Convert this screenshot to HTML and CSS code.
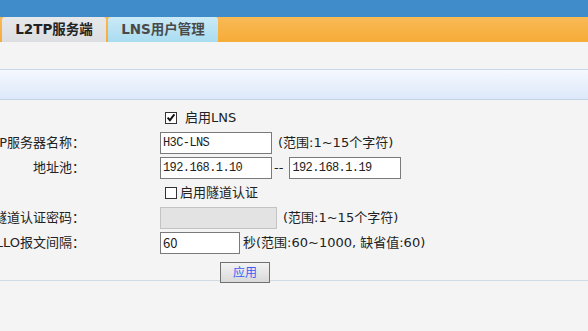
FILE: index.html
```html
<!DOCTYPE html>
<html lang="zh-CN">
<head>
<meta charset="utf-8">
<title>L2TP服务端</title>
<link rel="stylesheet" href="styles.css">
</head>
<body>
<div class="page">
  <div class="topbar"></div>
  <div class="tabbar">
    <div class="tab tab-current">L2TP服务端</div>
    <div class="tab tab-other">LNS用户管理</div>
  </div>
  <div class="spacer"></div>
  <div class="strip"></div>
  <div class="form">
    <div class="lbl"></div>
    <div class="val">
      <label class="chk chk-wide">
        <svg class="box" width="12" height="12" viewBox="0 0 12 12"><rect x="0.5" y="0.5" width="11" height="11" fill="#fff" stroke="#333"/><path d="M2.6 5.6 L4.9 8.2 L9.4 2.4" fill="none" stroke="#111" stroke-width="1.9"/></svg>
        <span>启用LNS</span>
      </label>
    </div>

    <div class="lbl">L2TP服务器名称<span class="colon">：</span></div>
    <div class="val"><input class="txt mono w112" value="H3C-LNS"><span class="hint">(范围:1~15个字符)</span></div>

    <div class="lbl">地址池<span class="colon">：</span></div>
    <div class="val"><input class="txt mono w112" value="192.168.1.10"><span class="dash">--</span><input class="txt mono w112" value="192.168.1.19"></div>

    <div class="lbl"></div>
    <div class="val">
      <label class="chk">
        <svg class="box" width="12" height="12" viewBox="0 0 12 12"><rect x="0.5" y="0.5" width="11" height="11" fill="#fff" stroke="#333"/></svg>
        <span>启用隧道认证</span>
      </label>
    </div>

    <div class="lbl">隧道认证密码<span class="colon">：</span></div>
    <div class="val"><input class="txt w117" disabled><span class="hint">(范围:1~15个字符)</span></div>

    <div class="lbl">HELLO报文间隔<span class="colon">：</span></div>
    <div class="val"><input class="txt sans w80" value="60"><span class="hint hint-tight">秒(范围:60~1000, 缺省值:60)</span></div>

    <div class="lbl"></div>
    <div class="val val-btn"><button class="btn" type="button">应用</button></div>
  </div>
  <div class="footline"></div>
</div>
</body>
</html>
```

FILE: styles.css
```css
html, body {
  margin: 0;
  padding: 0;
}
body {
  background: #f4f4f4;
  font-family: "DejaVu Sans", "Noto Sans CJK SC", sans-serif;
  font-size: 13px;
  color: #222;
  overflow: hidden;
  text-spacing-trim: space-all;
}
.page {
  width: 588px;
  height: 331px;
  overflow: hidden;
}
.topbar {
  height: 17px;
  background: #408bc9;
}
.tabbar {
  height: 25px;
  display: flex;
  gap: 2px;
  padding-left: 2px;
  background: linear-gradient(#f9b956, #f6ac38);
}
.tab {
  height: 25px;
  display: flex;
  align-items: center;
  justify-content: center;
  border-radius: 3px 3px 0 0;
  font-weight: bold;
  font-size: 13.5px;
  line-height: 1;
}
.tab-current {
  width: 104px;
  background: linear-gradient(#e6e8ea, #dcdee1);
  color: #222;
}
.tab-other {
  width: 110px;
  background: linear-gradient(#cbeaf7, #a9dcf0);
  color: #4a4a4a;
}
.spacer {
  height: 27px;
}
.strip {
  height: 29px;
  border-top: 1px solid #c8d8e8;
  border-bottom: 1px solid #c3d3e6;
  background: linear-gradient(#f5f8fe, #dce8f9);
}
.form {
  display: grid;
  grid-template-columns: 160px 1fr;
  grid-auto-rows: 25px;
  column-gap: 75px;
  margin-left: -75px;
  padding-top: 5px;
  align-items: center;
}
.lbl {
  text-align: right;
  white-space: nowrap;
  line-height: 16px;
  color: #222;
}
.colon {
  font-family: "Noto Sans CJK TC", "Noto Sans CJK SC", sans-serif;
}
.val {
  display: flex;
  align-items: center;
  white-space: nowrap;
  line-height: 16px;
}
.val-btn {
  height: 28px;
  align-self: start;
}
.chk {
  display: flex;
  align-items: center;
  margin-left: 5px;
  gap: 3px;
}
.chk-wide {
  gap: 8px;
}
.box {
  display: block;
}
.txt {
  box-sizing: border-box;
  height: 22px;
  margin: 0;
  padding: 0 2px;
  border: 1px solid #7a7a7a;
  background: #fff;
  color: #222;
  outline: none;
}
.mono {
  font-family: "Liberation Mono", monospace;
  font-size: 12px;
  letter-spacing: -0.6px;
}
.sans {
  font-family: "Noto Sans CJK SC", "Noto Sans", sans-serif;
  font-size: 13px;
}
.txt:disabled {
  background: #e3e3e3;
  border-color: #c3c3c3;
}
.w112 { width: 112px; }
.w117 { width: 117px; }
.w80 { width: 80px; }
.hint {
  margin-left: 6px;
}
.hint-tight {
  margin-left: 3px;
}
.dash {
  margin: 0 6px 0 2px;
  color: #222;
}
.btn {
  box-sizing: border-box;
  width: 50px;
  height: 21px;
  margin: 6px 0 0 60px;
  padding: 0;
  border: 1px solid #707070;
  background: linear-gradient(#f3f3f3, #d9d9d9);
  color: #3b5ff5;
  font-family: "Noto Sans CJK SC", sans-serif;
  font-size: 12px;
  line-height: 1;
}
.footline {
  height: 1px;
  background: #d0dbe6;
}
```
